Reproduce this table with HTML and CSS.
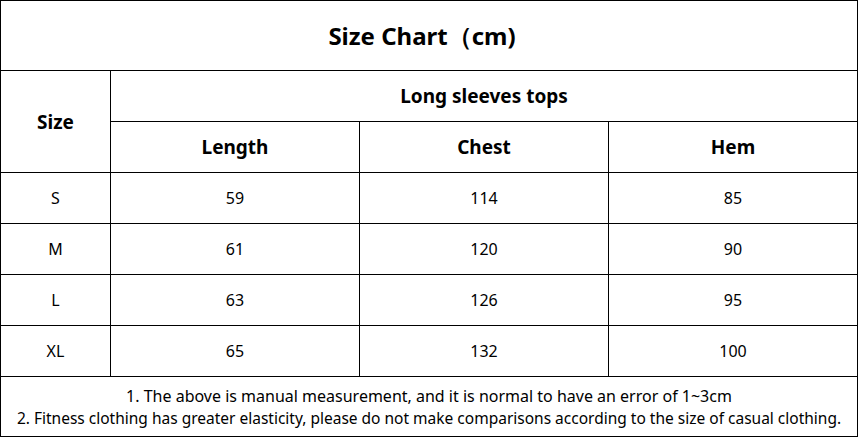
FILE: index.html
```html
<!DOCTYPE html>
<html>
<head>
<meta charset="utf-8">
<link rel="stylesheet" href="styles.css">
</head>
<body>
<table class="chart">
  <colgroup>
    <col class="c-size">
    <col class="c-val">
    <col class="c-val">
    <col class="c-val">
  </colgroup>
  <tr class="r-title"><td colspan="4" class="title">Size Chart（cm)</td></tr>
  <tr class="r-head"><td rowspan="2" class="head">Size</td><td colspan="3" class="head">Long sleeves tops</td></tr>
  <tr class="r-head"><td class="head">Length</td><td class="head">Chest</td><td class="head">Hem</td></tr>
  <tr class="r-data"><td>S</td><td>59</td><td>114</td><td>85</td></tr>
  <tr class="r-data"><td>M</td><td>61</td><td>120</td><td>90</td></tr>
  <tr class="r-data"><td>L</td><td>63</td><td>126</td><td>95</td></tr>
  <tr class="r-data"><td>XL</td><td>65</td><td>132</td><td>100</td></tr>
  <tr class="r-note"><td colspan="4" class="note"><span class="n1">1. The above is manual measurement, and it is normal to have an error of 1~3cm</span><br><span class="n2">2. Fitness clothing has greater elasticity, please do not make comparisons according to the size of casual clothing.</span></td></tr>
</table>
</body>
</html>
```

FILE: styles.css
```css
html, body {
  margin: 0;
  padding: 0;
  background: #fff;
}
.chart {
  border-collapse: collapse;
  table-layout: fixed;
  width: 858px;
  font-family: "Noto Sans", "Open Sans", sans-serif;
  color: #000;
}
.c-size { width: 110px; }
.c-val { width: 249px; }
.chart td {
  border: 1px solid #000;
  text-align: center;
  vertical-align: middle;
  padding: 0;
  font-size: 16px;
}
.r-title { height: 70px; }
.r-head { height: 51px; }
.r-data { height: 51px; }
.r-note { height: 60px; }
.chart td.title {
  font-size: 24px;
  font-weight: 700;
  padding-right: 14px;
}
.chart td.head {
  font-size: 19px;
  font-weight: 700;
}
.chart td.note {
  line-height: 22px;
}
.n1 { font-size: 16px; }
.n2 { font-size: 15.5px; }
```
